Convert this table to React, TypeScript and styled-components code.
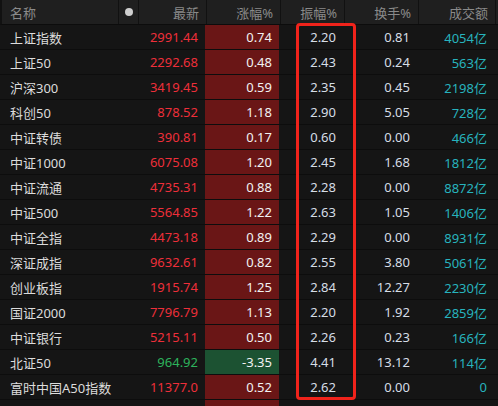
import React from "react";
import styled, { createGlobalStyle } from "styled-components";

const Global = createGlobalStyle`
  html, body { margin: 0; padding: 0; background: #151515; }
  body { font-family: "Noto Sans", "Noto Sans CJK SC", sans-serif; overflow: hidden; }
`;

const COLS = "117px 20px 68px 74px 64px 74px 77px 4px";

const Page = styled.div`
  position: relative;
  width: 498px;
  height: 406px;
  overflow: hidden;
  background: #151515;
`;

const HeaderRow = styled.div`
  display: grid;
  grid-template-columns: ${COLS};
  height: 25px;
  background: #1f1f1f;
  border-bottom: 1px solid #0c0c0c;
  box-sizing: border-box;
  border-left: 2px solid #111;
`;

const HeadCell = styled.div<{ $align?: "left" | "right" | "center" }>`
  display: flex;
  align-items: center;
  justify-content: ${(p) =>
    p.$align === "left" ? "flex-start" : p.$align === "center" ? "center" : "flex-end"};
  padding: 0 ${(p) => (p.$align === "left" ? "0 0 8px" : "8px 0 0")};
  padding-left: ${(p) => (p.$align === "left" ? "8px" : "0")};
  padding-right: ${(p) => (p.$align === "right" || !p.$align ? "7px" : "0")};
  border-right: 1px solid #111;
  color: #8a8a8a;
  font-size: 13px;
  box-sizing: border-box;
  &:last-child { border-right: none; }
`;

const Dot = styled.span`
  width: 8px;
  height: 8px;
  border-radius: 50%;
  background: #cfcfcf;
`;

const Row = styled.div`
  display: grid;
  grid-template-columns: ${COLS};
  height: 25px;
  border-bottom: 1px solid #0d0d0d;
  box-sizing: border-box;
`;

const NameCell = styled.div`
  display: flex;
  align-items: center;
  padding-left: 10px;
  color: #dcdcdc;
  font-size: 13px;
  white-space: nowrap;
  grid-column: span 2;
`;

const NumCell = styled.div<{ $color: string; $bg?: string }>`
  display: flex;
  align-items: center;
  justify-content: flex-end;
  padding-right: 7px;
  color: ${(p) => p.$color};
  background: ${(p) => p.$bg || "transparent"};
  font-size: 13px;
  box-sizing: border-box;
  white-space: nowrap;
`;

const Highlight = styled.div`
  position: absolute;
  left: 296px;
  top: 23px;
  width: 60px;
  height: 377px;
  border: 3px solid #f0231b;
  border-radius: 4px;
  box-sizing: border-box;
  pointer-events: none;
`;

type R = [string, string, string, string, string, string];

const rows: R[] = [
  ["上证指数", "2991.44", "0.74", "2.20", "0.81", "4054亿"],
  ["上证50", "2292.68", "0.48", "2.43", "0.24", "563亿"],
  ["沪深300", "3419.45", "0.59", "2.35", "0.45", "2198亿"],
  ["科创50", "878.52", "1.18", "2.90", "5.05", "728亿"],
  ["中证转债", "390.81", "0.17", "0.60", "0.00", "466亿"],
  ["中证1000", "6075.08", "1.20", "2.45", "1.68", "1812亿"],
  ["中证流通", "4735.31", "0.88", "2.28", "0.00", "8872亿"],
  ["中证500", "5564.85", "1.22", "2.63", "1.05", "1406亿"],
  ["中证全指", "4473.18", "0.89", "2.29", "0.00", "8931亿"],
  ["深证成指", "9632.61", "0.82", "2.55", "3.80", "5061亿"],
  ["创业板指", "1915.74", "1.25", "2.84", "12.27", "2230亿"],
  ["国证2000", "7796.79", "1.13", "2.20", "1.92", "2859亿"],
  ["中证银行", "5215.11", "0.50", "2.26", "0.23", "166亿"],
  ["北证50", "964.92", "-3.35", "4.41", "13.12", "114亿"],
  ["富时中国A50指数", "11377.0", "0.52", "2.62", "0.00", "0"],
  ["", "", "", "", "", ""],
];

const RED = "#ee2f3a";
const GREEN = "#2db35c";
const RED_BG = "#6a1616";
const GREEN_BG = "#1c5232";
const PLAIN = "#d6dde6";
const CYAN = "#27b3bd";

export default function App() {
  return (
    <Page>
      <Global />
      <HeaderRow>
        <HeadCell $align="left">名称</HeadCell>
        <HeadCell $align="center">
          <Dot />
        </HeadCell>
        <HeadCell>最新</HeadCell>
        <HeadCell>涨幅%</HeadCell>
        <HeadCell>振幅%</HeadCell>
        <HeadCell>换手%</HeadCell>
        <HeadCell>成交额</HeadCell>
        <HeadCell $align="center" />
      </HeaderRow>
      {rows.map((r, i) => {
        const down = r[2].startsWith("-");
        return (
          <Row key={i}>
            <NameCell>{r[0]}</NameCell>
            <NumCell $color={down ? GREEN : RED}>{r[1]}</NumCell>
            <NumCell $color="#f2f2f2" $bg={down ? GREEN_BG : RED_BG}>
              {r[2]}
            </NumCell>
            <NumCell $color={PLAIN}>{r[3]}</NumCell>
            <NumCell $color={PLAIN}>{r[4]}</NumCell>
            <NumCell $color={CYAN}>{r[5]}</NumCell>
            <div />
          </Row>
        );
      })}
      <Highlight />
    </Page>
  );
}
